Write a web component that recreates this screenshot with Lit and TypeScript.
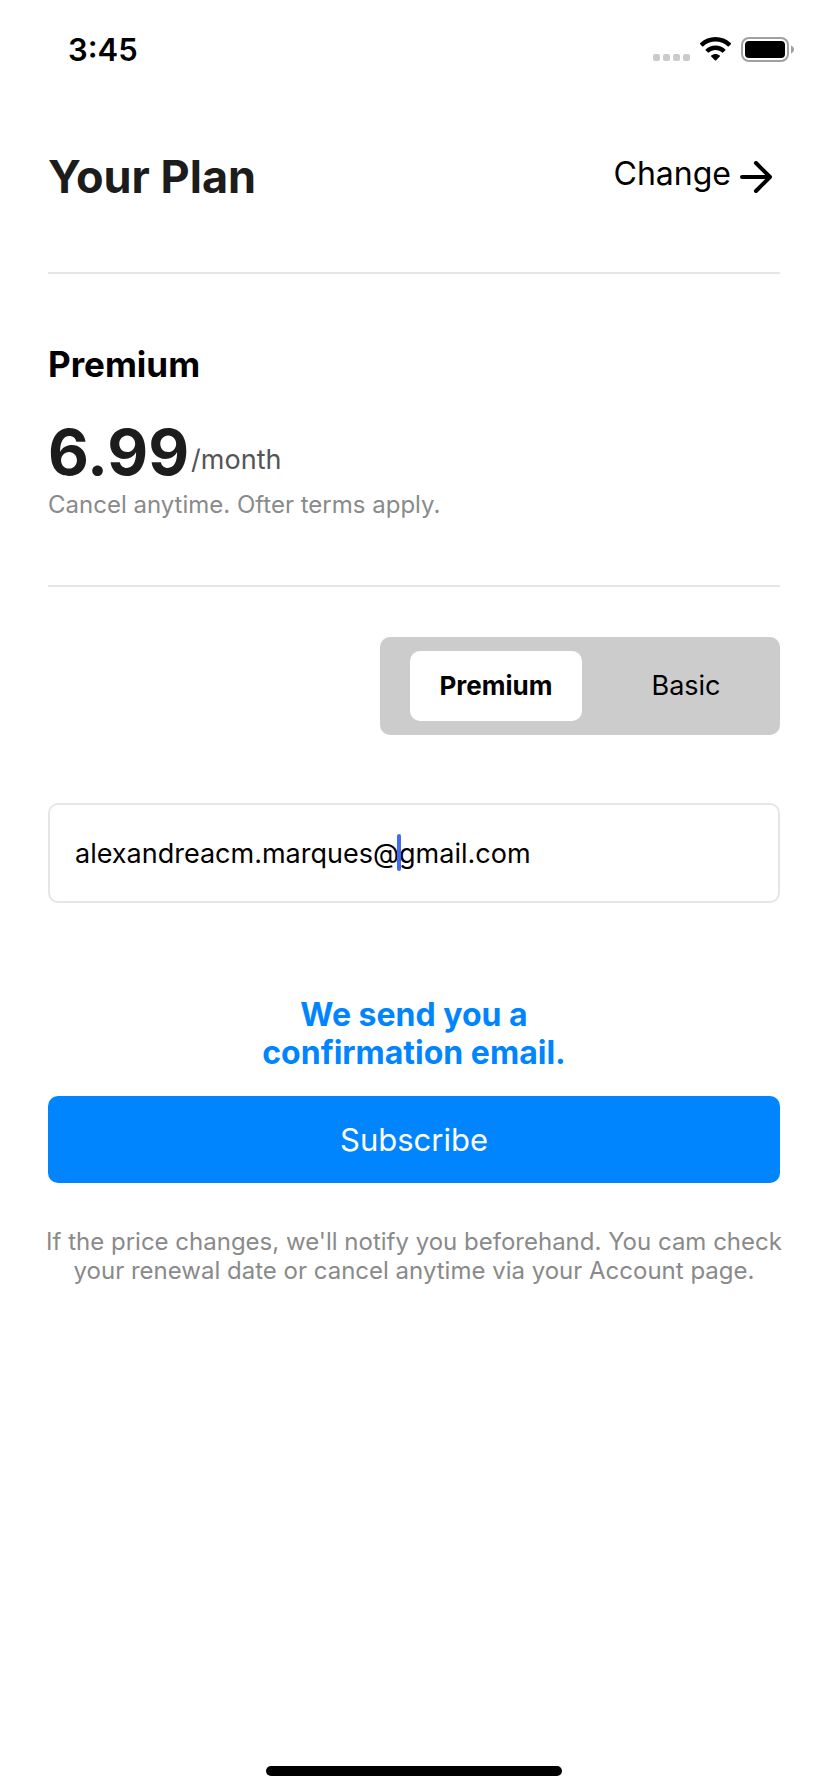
import { LitElement, html, css } from "lit";
import { customElement, state } from "lit/decorators.js";

type Plan = "Premium" | "Basic";

@customElement("status-bar")
export class StatusBar extends LitElement {
  static styles = css`
    :host {
      display: flex;
      align-items: center;
      justify-content: space-between;
      height: 100px;
      padding: 0 34px 0 68px;
    }
    .time {
      font-size: 31px;
      line-height: 40px;
      font-weight: 600;
    }
    .indicators {
      display: flex;
      align-items: flex-start;
      gap: 10px;
    }
    svg {
      display: block;
    }
  `;

  render() {
    return html`
      <span class="time">3:45</span>
      <div class="indicators">
        <svg width="37" height="24" viewBox="0 0 37 24" fill="#cbcbcb" aria-hidden="true">
          <rect x="0" y="17" width="7" height="7" rx="2" />
          <rect x="10" y="17" width="7" height="7" rx="2" />
          <rect x="20" y="17" width="7" height="7" rx="2" />
          <rect x="30" y="17" width="7" height="7" rx="2" />
        </svg>
        <svg width="31" height="24" viewBox="0 0 31 24" aria-hidden="true">
          <path d="M15.5 0C21.300 0 26.800 2.200 31 6.300Q31.300 6.700 31 7.100L28.700 9.400Q28.300 9.700 27.900 9.400C24.500 6.200 20.100 4.500 15.500 4.500S6.500 6.200 3.100 9.400Q2.700 9.700 2.300 9.400L0 7.100Q-.3 6.700 0 6.300C4.200 2.200 9.700 0 15.500 0Z" />
          <path d="M15.500 8.600C19.200 8.600 22.700 10 25.400 12.500Q25.800 12.900 25.400 13.300L23 15.600Q22.600 15.900 22.200 15.600C20.400 13.900 18 13 15.500 13S10.600 13.900 8.800 15.600Q8.400 15.900 8 15.600L5.600 13.300Q5.200 12.900 5.600 12.500C8.300 10 11.800 8.600 15.500 8.600Z" />
          <path d="M15.500 17C17 17 18.600 17.600 19.800 18.600Q20.200 19 19.800 19.400L15.900 23.400Q15.500 23.700 15.100 23.400L11.200 19.400Q10.800 19 11.200 18.600C12.400 17.600 14 17 15.500 17Z" />
        </svg>
        <svg width="53" height="26" viewBox="0 0 53 26" aria-hidden="true">
          <rect x="1" y="1" width="46" height="23" rx="7" fill="none" stroke="#a0a0a0" stroke-width="2" />
          <rect x="4" y="4" width="40" height="17" rx="4" />
          <path d="M50 8.500C52 9.300 53 10.800 53 12.500S52 15.700 50 16.500Z" fill="#a0a0a0" />
        </svg>
      </div>
    `;
  }
}

@customElement("app-root")
export class AppRoot extends LitElement {
  @state() private plan: Plan = "Premium";

  static styles = css`
    :host {
      display: flex;
      flex-direction: column;
      min-height: 100vh;
      box-sizing: border-box;
      padding-bottom: 16px;
      background: #ffffff;
      color: #000000;
      font-family: Inter, "Liberation Sans", sans-serif;
    }
    main {
      display: flex;
      flex-direction: column;
      padding: 0 48px;
    }
    h1,
    h2,
    p {
      margin: 0;
    }
    header {
      display: flex;
      align-items: center;
      justify-content: space-between;
      padding: 48px 8px 66px 0;
      border-bottom: 2px solid #e6e6e6;
    }
    h1 {
      color: #1c1c1c;
      font-size: 45px;
      line-height: 58px;
      font-weight: 700;
    }
    .change {
      display: flex;
      align-items: center;
      gap: 9px;
      padding-bottom: 6px;
      color: inherit;
      font-size: 32px;
      line-height: 40px;
      text-decoration: none;
    }
    .change svg {
      display: block;
      margin-top: 6px;
    }
    .plan {
      display: flex;
      flex-direction: column;
      padding: 68px 0 66px;
      border-bottom: 2px solid #e6e6e6;
    }
    h2 {
      font-size: 35px;
      line-height: 44px;
      font-weight: 700;
    }
    .price {
      display: flex;
      align-items: flex-end;
      gap: 2px;
      margin-top: 28px;
    }
    .amount {
      color: #1c1c1c;
      font-size: 63px;
      line-height: 76px;
      font-weight: 700;
    }
    .period {
      padding-bottom: 13px;
      color: #555555;
      font-size: 27px;
      line-height: 34px;
    }
    .note {
      color: #8a8a8a;
      font-size: 24px;
      line-height: 29px;
    }
    .switch {
      display: flex;
      align-self: flex-end;
      box-sizing: border-box;
      width: 400px;
      max-width: 100%;
      margin-top: 50px;
      padding: 14px 8px 14px 30px;
      border-radius: 10px;
      background: #cccccc;
      gap: 18px;
    }
    .option {
      flex: 1;
      height: 70px;
      padding: 0 0 2px;
      border: 0;
      border-radius: 10px;
      background: transparent;
      color: inherit;
      font-family: inherit;
      font-size: 27px;
      cursor: pointer;
    }
    .option.selected {
      background: #ffffff;
      font-size: 26px;
      font-weight: 700;
    }
    .field {
      position: relative;
      margin-top: 68px;
    }
    .email {
      display: block;
      box-sizing: border-box;
      width: 100%;
      height: 100px;
      padding: 0 25px;
      border: 2px solid #e6e6e6;
      border-radius: 10px;
      background: #ffffff;
      color: inherit;
      font-family: inherit;
      font-size: 27px;
      outline: none;
    }
    .caret {
      position: absolute;
      top: 31px;
      left: 349px;
      width: 4px;
      height: 37px;
      border-radius: 2px;
      background: #426bf2;
    }
    .confirm {
      align-self: center;
      max-width: 320px;
      margin-top: 93px;
      color: #0085ff;
      font-size: 32px;
      line-height: 38px;
      font-weight: 700;
      text-align: center;
    }
    .subscribe {
      height: 87px;
      margin-top: 24px;
      padding: 0;
      border: 0;
      border-radius: 10px;
      background: #0085ff;
      color: #ffffff;
      font-family: inherit;
      font-size: 31px;
      cursor: pointer;
    }
    .terms {
      margin: 44px -8px 0;
      color: #8a8a8a;
      font-size: 24px;
      line-height: 29px;
      text-align: center;
    }
    .home {
      align-self: center;
      width: 296px;
      height: 10px;
      margin-top: auto;
      border-radius: 5px;
      background: #000000;
    }
  `;

  private renderOption(name: Plan) {
    const active = this.plan === name;
    return html`<button
      type="button"
      class="option ${active ? "selected" : ""}"
      aria-pressed=${active ? "true" : "false"}
      @click=${() => (this.plan = name)}
    >${name}</button>`;
  }

  render() {
    return html`
      <status-bar></status-bar>
      <main>
        <header>
          <h1>Your Plan</h1>
          <a class="change" href="#change">
            Change
            <svg width="32" height="32" viewBox="0 0 32 32" fill="none" stroke="#000000" stroke-width="4" stroke-linecap="round" stroke-linejoin="round" aria-hidden="true">
              <path d="M2 16H30M16 2L30 16L16 30" />
            </svg>
          </a>
        </header>
        <section class="plan">
          <h2>Premium</h2>
          <p class="price"><span class="amount">6.99</span><span class="period">/month</span></p>
          <p class="note">Cancel anytime. Ofter terms apply.</p>
        </section>
        <div class="switch" role="group" aria-label="Plan">
          ${this.renderOption("Premium")}${this.renderOption("Basic")}
        </div>
        <div class="field">
          <input class="email" type="email" aria-label="Email" .value=${"alexandreacm.marques@gmail.com"} />
          <span class="caret"></span>
        </div>
        <p class="confirm">We send you a confirmation email.</p>
        <button class="subscribe" type="button">Subscribe</button>
        <p class="terms">
          If the price changes, we'll notify you beforehand. You cam check your renewal date or cancel anytime via your Account page.
        </p>
      </main>
      <div class="home"></div>
    `;
  }
}
